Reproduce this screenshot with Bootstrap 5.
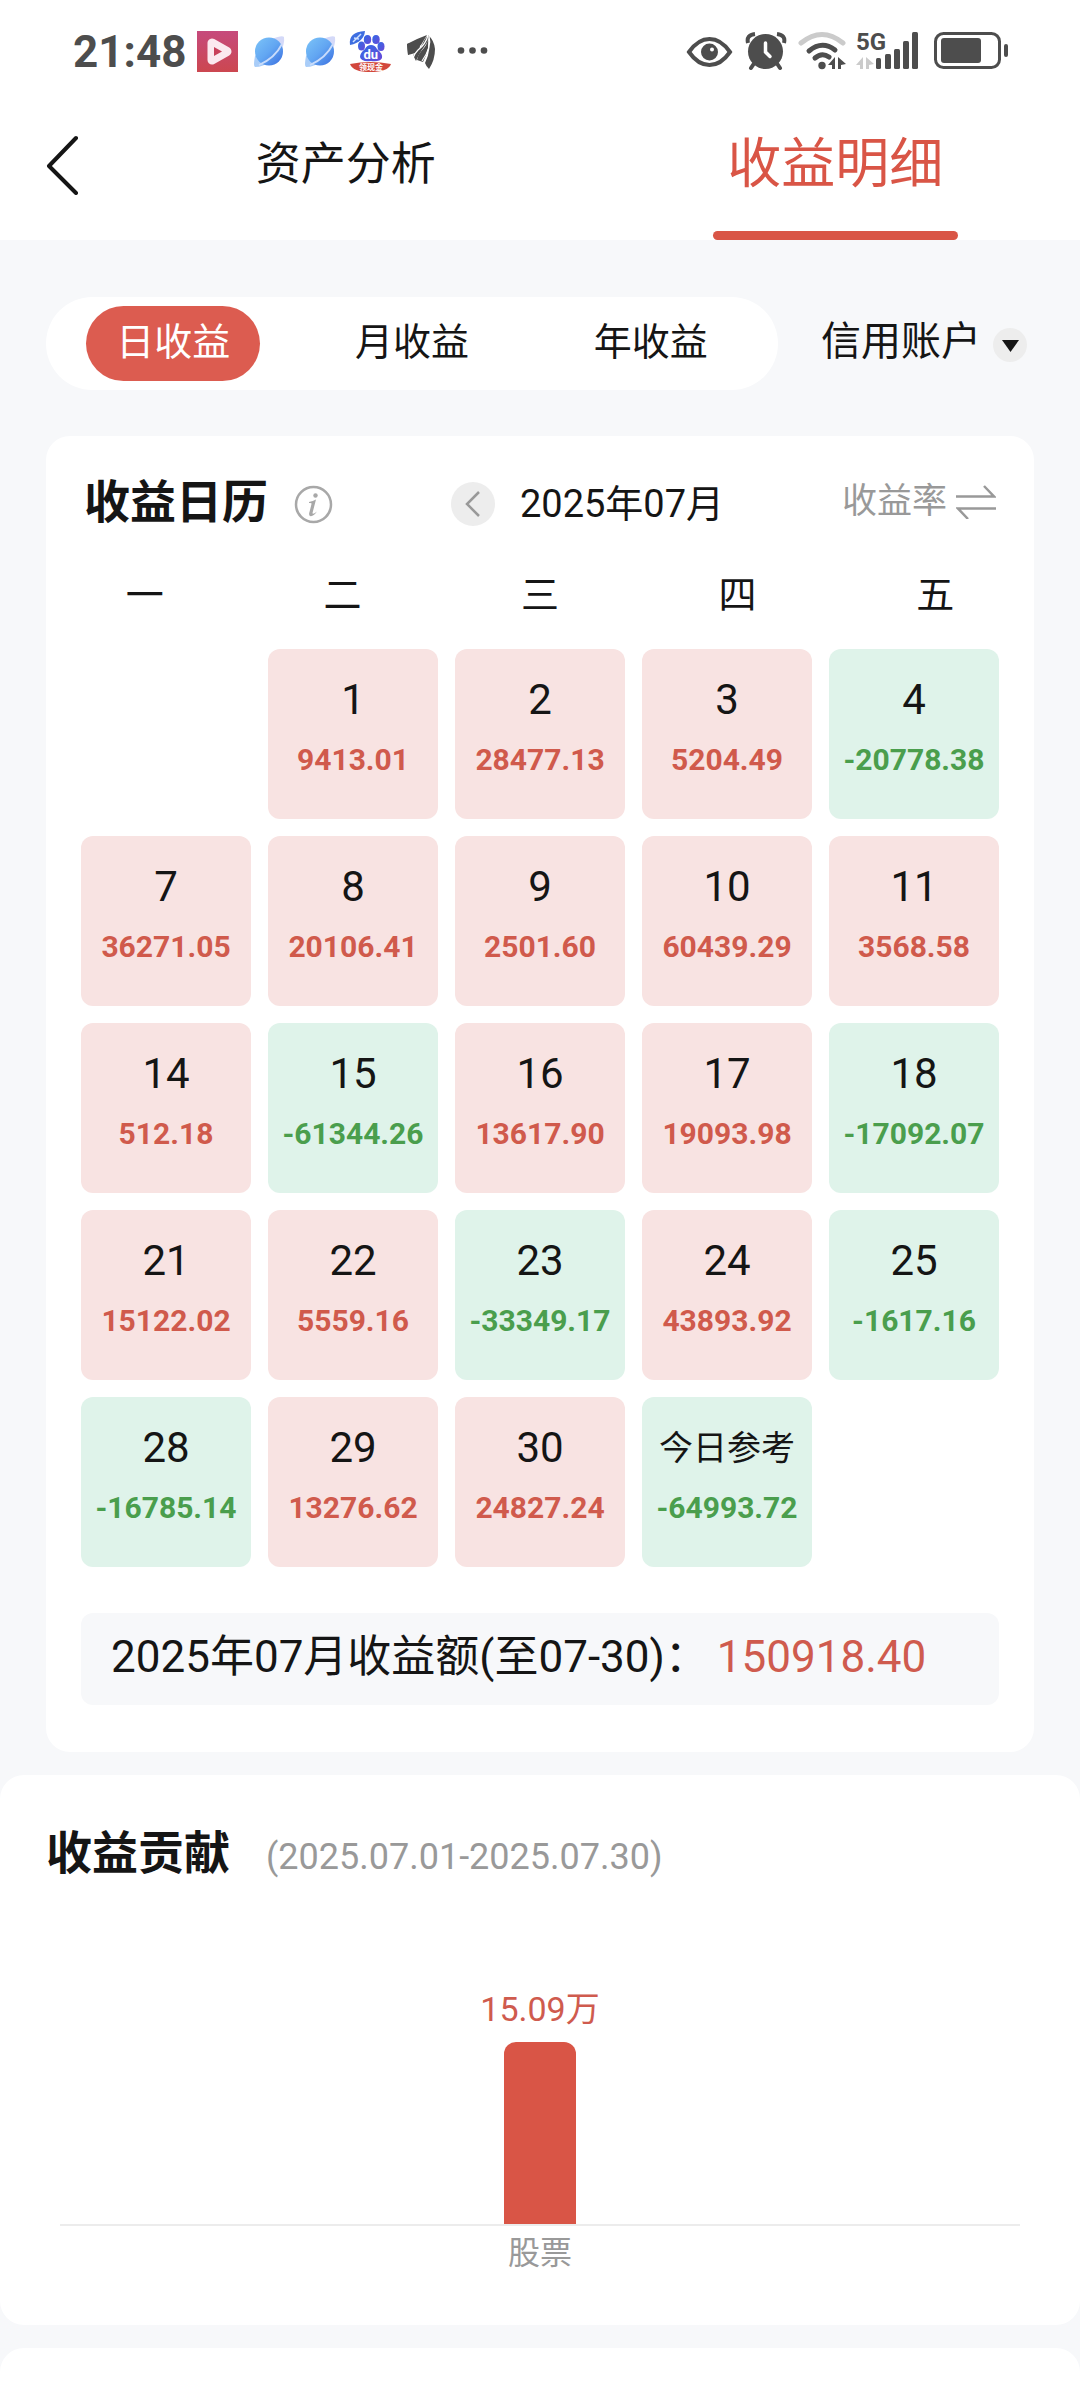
<!DOCTYPE html>
<html lang="zh-CN">
<head>
<meta charset="utf-8">
<meta name="viewport" content="width=device-width, initial-scale=1">
<title>收益明细</title>
<link href="https://cdn.jsdelivr.net/npm/bootstrap@5.3.0/dist/css/bootstrap.min.css" rel="stylesheet">
<style>
  :root { --ink: #151515; --red: #d95546; --green: #4a9e4d; --muted: #999; --page: #f7f8fa; --dark: #4d4d4d; }
  body { background: var(--page); color: var(--ink); font-family: Roboto, "Noto Sans CJK SC", sans-serif; font-size: 38px; line-height: 60px; }
  button, select { font-family: inherit; color: inherit; }
  svg { display: block; flex: none; }
  .plain-btn { border: 0; background: none; padding: 0; }

  .status-bar { padding: 25px 72px 7px 73px; color: var(--dark); }
  .status-bar .clock { font-size: 44px; font-weight: 700; line-height: 42px; }

  .top-nav { height: 154px; }
  .top-nav .back { width: 101px; padding: 4px 0 0 44px; }
  .top-tab { flex: 1 1 0; padding-top: 4px; color: var(--ink); font-size: 45px; text-decoration: none; position: relative; }
  .top-tab.active { color: var(--red); font-size: 54px; }
  .top-tab.active::after { content: ""; position: absolute; left: 25%; bottom: 0; width: 50%; height: 9px; border-radius: 5px; background: var(--red); }

  .page-body { padding: 57px 46px 23px; }
  .filters { gap: 43px; margin-bottom: 46px; }
  .period { padding: 9px 8px; border-radius: 47px; }
  .period > div { flex: 1 1 0; }
  .period button { height: 75px; padding: 0 30px 4px; border-radius: 38px; }
  .period .active { background: #dc5c50; color: #fff; }
  .account select { appearance: none; border: 0; background: none; padding: 0 53px 4px 0; font-size: 40px; height: 93px; }
  .account svg { position: absolute; right: 7px; top: 31px; pointer-events: none; }

  .panel { border-radius: 24px; background: #fff; }
  .cal { padding: 36px 35px 47px; }
  .cal-head { height: 60px; padding: 0 3px; margin-bottom: 33px; }
  .heading { font-size: 46px; font-weight: 700; line-height: 60px; margin: 0; }
  .info { margin-left: 26px; padding-top: 4px; }
  .month { gap: 25px; padding-top: 4px; }
  .rate { font-size: 35px; color: var(--muted); gap: 9px; }
  .weekdays { margin: 0 -35px 24px; }
  .weekdays span { flex: 1 1 0; text-align: center; }
  .days { display: grid; grid-template-columns: repeat(5, 1fr); gap: 17px; }
  .day { aspect-ratio: 1; border-radius: 12px; padding-top: 21px; text-align: center; white-space: nowrap; }
  .day b, .day span { display: block; }
  .day span { font-size: 42px; }
  .day .today { font-size: 34px; }
  .day b { font-size: 30px; }
  .up { background: #f8e3e2; }
  .up b { color: #d05a4c; }
  .down { background: #dff3ea; }
  .down b { color: var(--green); }
  .start-tue { grid-column: 2; }
  .total { height: 92px; margin-top: 46px; padding: 14px 30px 18px; border-radius: 12px; background: var(--page); font-size: 44px; }
  .total strong { margin-left: 8px; font-weight: 400; color: #cf5b4e; }

  .contrib { padding: 48px 0; }
  .contrib-head { height: 60px; padding: 0 46px; gap: 36px; }
  .range { font-size: 36px; color: var(--muted); }
  .plot { height: 343px; margin: 0 60px 3px; border-bottom: 2px solid #ececec; }
  .plot .amount { font-size: 34px; line-height: 48px; color: #cf5b4e; margin-bottom: 9px; }
  .plot .bar { width: 72px; border-radius: 12px 12px 0 0; background: var(--red); }
  .category { font-size: 32px; line-height: 48px; color: var(--muted); }
  .next-panel { height: 52px; margin-top: 23px; border-radius: 24px 24px 0 0; }
</style>
<script src="https://cdn.jsdelivr.net/npm/bootstrap@5.3.0/dist/js/bootstrap.bundle.min.js" defer></script>
</head>
<body>
<header class="bg-white">
  <div class="status-bar d-flex justify-content-between align-items-center">
    <div class="d-flex align-items-center">
      <span class="clock">21:48</span>
      <svg class="ms-2" width="298" height="54" viewBox="194 25 298 54" aria-hidden="true">
        <defs>
          <linearGradient id="g1" x1="0" y1="0" x2="0" y2="1"><stop offset="0" stop-color="#c64a7c"/><stop offset="1" stop-color="#cc4750"/></linearGradient>
          <linearGradient id="g2" x1="0" y1="0" x2="1" y2="1"><stop offset="0" stop-color="#7cc4f8"/><stop offset=".5" stop-color="#62a6f2"/><stop offset="1" stop-color="#3a6ee0"/></linearGradient>
          <linearGradient id="g3" x1="0" y1="0" x2="1" y2="1"><stop offset="0" stop-color="#2f6ce6"/><stop offset="1" stop-color="#6a48d8"/></linearGradient>
          <g id="planet">
            <path d="M1 20Q-1 30 1 31Q9 31 17 25L6 15Z" fill="#a9cdf8"/>
            <path d="M18 3Q28-1 30 1Q31 9 26 15Z" fill="#d4d9f8"/>
            <circle cx="15" cy="15.500" r="14" fill="url(#g2)"/>
            <path d="M5 29Q21 22 28 8" fill="none" stroke="#c9dcfb" stroke-width="1.800"/>
          </g>
        </defs>
        <rect x="197" y="31" width="41" height="41" fill="url(#g1)"/>
        <path d="M212 43V60L227 51.500Z" fill="none" stroke="#fbe9ef" stroke-width="9" stroke-linejoin="round"/>
        <path d="M214 47V56L222 51.500Z" fill="#c8405a"/>
        <use href="#planet" x="254" y="36"/>
        <use href="#planet" x="305" y="36"/>
        <path d="M350 45Q348 32 365 31Q364 42 350 45Z" fill="#3d6de0"/>
        <path d="M353 42L361 34M354 38L359 39" stroke="#cfe0ff" stroke-width="1.500"/>
        <g fill="url(#g3)">
          <ellipse cx="361.500" cy="46" rx="3.500" ry="4.500"/><ellipse cx="367.500" cy="39.500" rx="3.700" ry="4.500"/>
          <ellipse cx="376" cy="39.500" rx="3.700" ry="4.500"/><ellipse cx="381" cy="46.500" rx="3.500" ry="4.500"/>
          <path d="M371 45Q375 45 377 49Q383 54 382 58Q380 62 371 61Q361 62 360 57Q360 53 365 49Q367 45 371 45Z"/>
        </g>
        <text x="363.500" y="59" font-size="13" font-weight="700" fill="#fff">du</text>
        <path d="M350 64Q370 60 391 64Q388 72 370 72Q353 72 350 64Z" fill="#d2473c"/>
        <text x="359" y="70" font-size="8" font-weight="700" fill="#fff">领现金</text>
        <g fill="#4d4d4d">
          <path d="M407 44Q416 39 427 35Q424 40 421 45Q415 48 408 55Z"/>
          <path d="M427 36Q430 39 424 47Q420 52 416 61L413 55Q419 51 422 45Q424 40 427 36Z"/>
          <path d="M428 35Q434 40 435 49Q435 60 429 69Q426 66 425 63Q432 49 428 35Z"/>
          <path d="M427 35Q431 47 423 62L417 60Q418 54 424 48Q429 42 427 35Z"/>
          <path d="M407 44L421 40L419 52L408 55Z"/>
        </g>
        <path d="M428 35Q426 44 418 50Q414 54 413 58M429 36Q432 47 422 61" fill="none" stroke="#fff" stroke-width="1.200"/>
        <g fill="#4d4d4d"><circle cx="461" cy="50.500" r="3.300"/><circle cx="472.500" cy="50.500" r="3.300"/><circle cx="484" cy="50.500" r="3.300"/></g>
      </svg>
    </div>
    <svg width="322" height="54" viewBox="686 25 322 54" aria-hidden="true">
      <path d="M689 52Q698 39 709.500 39Q721 39 730 52Q721 65 709.500 65Q698 65 689 52Z" fill="none" stroke="#4d4d4d" stroke-width="4"/>
      <circle cx="709.500" cy="52" r="8.500" fill="#4d4d4d"/><circle cx="712" cy="49.500" r="2" fill="#fff"/>
      <path d="M748 43Q746 35 755 34M784 43Q786 35 777 34" stroke="#4d4d4d" stroke-width="4" fill="none"/>
      <circle cx="765.500" cy="51.500" r="17.500" fill="#4d4d4d"/>
      <path d="M755 62L751 68M776 62L780 68" stroke="#4d4d4d" stroke-width="4" stroke-linecap="round"/>
      <path d="M765.500 43V52L770 56.500" stroke="#fff" stroke-width="3.500" fill="none" stroke-linecap="round"/>
      <g fill="none" stroke-linecap="round" stroke-width="5">
        <path d="M801 43Q822 26 843 43" stroke="#cbcbcb"/>
        <path d="M809 51Q822 40 835 50" stroke="#4d4d4d"/>
        <path d="M815 58Q822 52 829 57" stroke="#4d4d4d"/>
      </g>
      <g fill="#4d4d4d">
        <circle cx="822" cy="65.500" r="3.700"/>
        <path d="M828 65L835 57V69H832V65ZM838 57L846 64L841 65V69H838Z"/>
        <text x="856" y="50" font-size="24" font-weight="700">5G</text>
        <rect x="876" y="58" width="5" height="11" rx="1.500"/><rect x="885" y="54" width="6" height="15" rx="1.500"/>
        <rect x="894" y="49" width="6" height="20" rx="1.500"/><rect x="903" y="41" width="6" height="28" rx="1.500"/>
        <rect x="912" y="32" width="6" height="37" rx="1.500"/>
        <rect x="941" y="38" width="40" height="25" rx="3"/>
        <rect x="1004" y="44" width="4" height="13" rx="2"/>
      </g>
      <path d="M856 65L863 57V69H860V65ZM866 57L874 64L869 65V69H866Z" fill="#cbcbcb"/>
      <rect x="935.500" y="33.500" width="64" height="34" rx="8" fill="none" stroke="#4d4d4d" stroke-width="3"/>
    </svg>
  </div>
  <nav class="top-nav d-flex align-items-stretch">
    <button type="button" class="back plain-btn d-flex align-items-center" aria-label="返回">
      <svg width="36" height="60" viewBox="0 0 36 60"><path d="M32 3L5 31L32 58" fill="none" stroke="#151515" stroke-width="4" stroke-linecap="round" stroke-linejoin="round"/></svg>
    </button>
    <a class="top-tab d-flex align-items-center justify-content-center" href="#analysis">资产分析</a>
    <a class="top-tab active d-flex align-items-center justify-content-center" href="#detail" aria-current="page">收益明细</a>
  </nav>
</header>

<main id="detail">
  <div class="page-body">
    <div class="filters d-flex align-items-center">
      <div class="period bg-white d-flex flex-grow-1">
        <div class="d-flex justify-content-center"><button type="button" class="plain-btn active" aria-pressed="true">日收益</button></div>
        <div class="d-flex justify-content-center"><button type="button" class="plain-btn">月收益</button></div>
        <div class="d-flex justify-content-center"><button type="button" class="plain-btn">年收益</button></div>
      </div>
      <div class="account position-relative">
        <select aria-label="账户"><option>信用账户</option></select>
        <svg width="34" height="34" viewBox="0 0 34 34"><circle cx="17" cy="17" r="17" fill="#ededed"/><path d="M9 12H26L17.500 24Z" fill="#151515"/></svg>
      </div>
    </div>

    <section class="cal panel">
      <div class="cal-head d-flex justify-content-between align-items-center">
        <div class="d-flex align-items-center">
          <h2 class="heading">收益日历</h2>
          <button type="button" class="info plain-btn" aria-label="说明">
            <svg width="39" height="39" viewBox="0 0 39 39" fill="#a8a8a8"><circle cx="19.500" cy="19.500" r="17.500" fill="none" stroke="#a8a8a8" stroke-width="2.500"/><circle cx="21.500" cy="10.500" r="2.200"/><path d="M15 17Q19 16 22 14.500L18.500 28Q18.500 30 23 26.500Q19 32 16 31Q14.500 30 15.500 27L17.500 19Q18 17.500 15 18Z"/></svg>
          </button>
        </div>
        <div class="month d-flex align-items-center">
          <button type="button" class="plain-btn" aria-label="上个月">
            <svg width="44" height="44" viewBox="0 0 44 44"><circle cx="22" cy="22" r="22" fill="#ededed"/><path d="M28 10L16 22L28 34" fill="none" stroke="#999" stroke-width="2.500"/></svg>
          </button>
          <span>2025年07月</span>
        </div>
        <button type="button" class="rate plain-btn d-flex align-items-center">收益率
          <svg width="40" height="34" viewBox="0 0 40 34"><path d="M0 11.500H38L28 1M40 23.500H2L12 34" fill="none" stroke="#999" stroke-width="2.500"/></svg>
        </button>
      </div>
      <div class="weekdays d-flex"><span>一</span><span>二</span><span>三</span><span>四</span><span>五</span></div>
      <div class="days">
        <div class="day up start-tue"><span>1</span><b>9413.01</b></div>
        <div class="day up"><span>2</span><b>28477.13</b></div>
        <div class="day up"><span>3</span><b>5204.49</b></div>
        <div class="day down"><span>4</span><b>-20778.38</b></div>
        <div class="day up"><span>7</span><b>36271.05</b></div>
        <div class="day up"><span>8</span><b>20106.41</b></div>
        <div class="day up"><span>9</span><b>2501.60</b></div>
        <div class="day up"><span>10</span><b>60439.29</b></div>
        <div class="day up"><span>11</span><b>3568.58</b></div>
        <div class="day up"><span>14</span><b>512.18</b></div>
        <div class="day down"><span>15</span><b>-61344.26</b></div>
        <div class="day up"><span>16</span><b>13617.90</b></div>
        <div class="day up"><span>17</span><b>19093.98</b></div>
        <div class="day down"><span>18</span><b>-17092.07</b></div>
        <div class="day up"><span>21</span><b>15122.02</b></div>
        <div class="day up"><span>22</span><b>5559.16</b></div>
        <div class="day down"><span>23</span><b>-33349.17</b></div>
        <div class="day up"><span>24</span><b>43893.92</b></div>
        <div class="day down"><span>25</span><b>-1617.16</b></div>
        <div class="day down"><span>28</span><b>-16785.14</b></div>
        <div class="day up"><span>29</span><b>13276.62</b></div>
        <div class="day up"><span>30</span><b>24827.24</b></div>
        <div class="day down"><span class="today">今日参考</span><b>-64993.72</b></div>
      </div>
      <div class="total">2025年07月收益额(至07-30)：<strong>150918.40</strong></div>
    </section>
  </div>

  <section class="contrib panel">
    <div class="contrib-head d-flex align-items-baseline">
      <h2 class="heading">收益贡献</h2>
      <span class="range">(2025.07.01-2025.07.30)</span>
    </div>
    <div class="plot d-flex flex-column justify-content-end align-items-center">
      <span class="amount">15.09万</span>
      <div class="bar" style="height: 182px"></div>
    </div>
    <div class="category text-center">股票</div>
  </section>
  <section class="next-panel bg-white"></section>
</main>
</body>
</html>
